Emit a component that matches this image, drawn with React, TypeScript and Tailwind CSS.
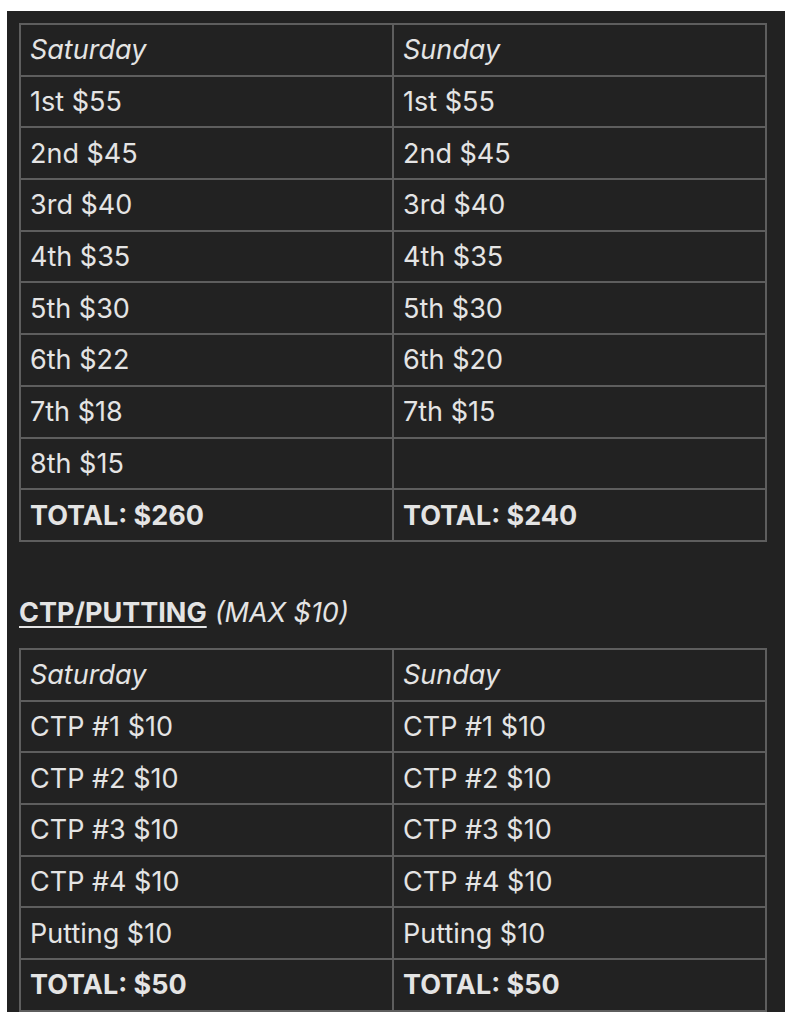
import React from 'react';

type Row = [string, string];

const prizeRows: Row[] = [
    ['1st $55', '1st $55'],
    ['2nd $45', '2nd $45'],
    ['3rd $40', '3rd $40'],
    ['4th $35', '4th $35'],
    ['5th $30', '5th $30'],
    ['6th $22', '6th $20'],
    ['7th $18', '7th $15'],
    ['8th $15', ''],
];

const ctpRows: Row[] = [
    ['CTP #1 $10', 'CTP #1 $10'],
    ['CTP #2 $10', 'CTP #2 $10'],
    ['CTP #3 $10', 'CTP #3 $10'],
    ['CTP #4 $10', 'CTP #4 $10'],
    ['Putting $10', 'Putting $10'],
];

const cell = 'h-[51.7px] border-2 border-[#5e5e5e] px-[9px] align-middle leading-none';

const PayoutTable: React.FC<{ rows: Row[]; totals: Row }> = ({ rows, totals }) => (
    <table className="w-[748px] table-fixed border-collapse border-2 border-[#5e5e5e] text-[27px] text-[#e4e4e4]">
        <tbody>
            <tr>
                <td className={`${cell} italic`}>Saturday</td>
                <td className={`${cell} italic`}>Sunday</td>
            </tr>
            {rows.map(([sat, sun], i) => (
                <tr key={i}>
                    <td className={cell}>{sat}</td>
                    <td className={cell}>{sun}</td>
                </tr>
            ))}
            <tr>
                <td className={`${cell} font-bold`}>{totals[0]}</td>
                <td className={`${cell} font-bold`}>{totals[1]}</td>
            </tr>
        </tbody>
    </table>
);

export default function App() {
    return (
        <div className="min-h-[1024px] bg-white pt-[11px] pl-[7px]" style={{ fontFamily: 'Inter, "Noto Sans", sans-serif' }}>
            <div className="w-[778px] h-[1001px] bg-[#222222] pt-[12px] pl-[12px]">
                <PayoutTable rows={prizeRows} totals={['TOTAL: $260', 'TOTAL: $240']} />
                <h3 className="mt-[56px] mb-[20px] h-[30px] flex items-center text-[27px] text-[#e4e4e4] leading-none">
                    <span className="font-bold underline underline-offset-[4px] decoration-2">CTP/PUTTING</span>
                    <span className="italic ml-[8px]">(MAX $10)</span>
                </h3>
                <PayoutTable rows={ctpRows} totals={['TOTAL: $50', 'TOTAL: $50']} />
            </div>
        </div>
    );
}
